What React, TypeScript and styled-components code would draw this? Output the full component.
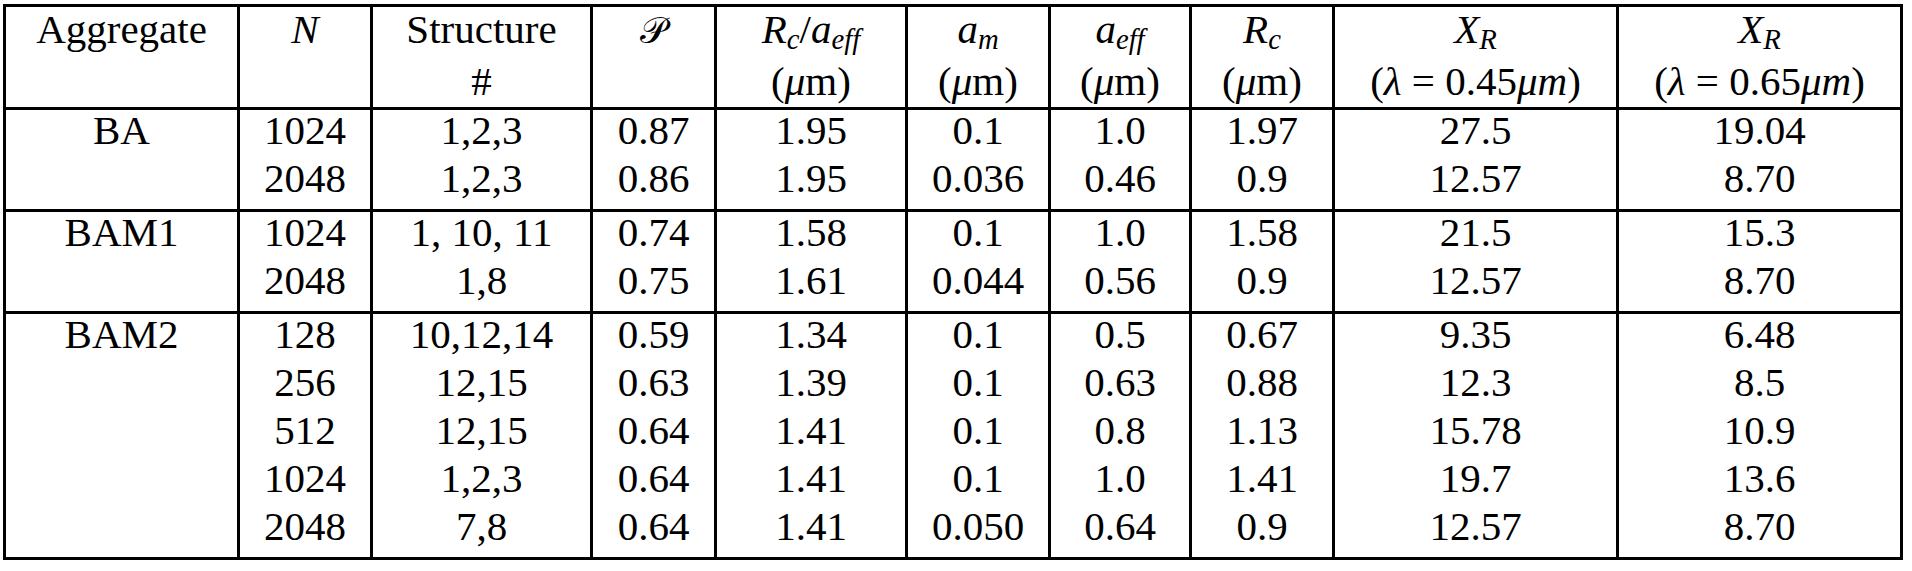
import React from "react";
import styled, { createGlobalStyle } from "styled-components";

const GlobalStyle = createGlobalStyle`
    html, body {
        margin: 0;
        padding: 0;
        background: #ffffff;
        font-family: "Liberation Serif", "Times New Roman", "DejaVu Serif", serif;
    }
`;

const columnWidths = [231, 133, 220, 124, 191, 143, 141, 143, 284, 284];

const Frame = styled.div`
    box-sizing: border-box;
    margin: 4px 0 0 3px;
    width: 1900px;
    border: 3px solid #000;
    display: grid;
    grid-template-columns: ${columnWidths.map((w) => `${w}px`).join(" ")};
    font-family: "Liberation Serif", "Times New Roman", "DejaVu Serif", serif;
    font-size: 41px;
    color: #000;
`;

const HeadCell = styled.div<{ $first: boolean }>`
    box-sizing: border-box;
    height: 100px;
    text-align: center;
    white-space: nowrap;
    font-family: "Liberation Serif", "Times New Roman", serif;
    border-left: ${(p) => (p.$first ? "none" : "3px solid #000")};
`;

const HeadStack = styled.div`
    margin-top: -4px;
`;

const HeadLine = styled.div`
    line-height: 52px;
`;

const Cell = styled.div<{ $first: boolean; $start: boolean; $end: boolean }>`
    box-sizing: border-box;
    padding-bottom: ${(p) => (p.$end ? 10 : 7)}px;
    line-height: 41px;
    text-align: center;
    white-space: nowrap;
    font-family: "Liberation Serif", "Times New Roman", serif;
    border-left: ${(p) => (p.$first ? "none" : "3px solid #000")};
    border-top: ${(p) => (p.$start ? "3px solid #000" : "none")};
`;

const Var = styled.i`
    font-style: italic;
    font-family: "Liberation Serif", "Times New Roman", serif;
`;

const Script = styled.span`
    font-family: "DejaVu Serif", "DejaVu Sans", "Noto Sans", serif;
    font-style: normal;
    font-size: 0.9em;
`;

const Sub = styled.i`
    font-size: 0.7em;
    font-style: italic;
    vertical-align: -0.22em;
    line-height: 0;
`;

type Row = string[];
type Group = { name: string; rows: Row[] };

const groups: Group[] = [
    {
        name: "BA",
        rows: [
            ["1024", "1,2,3", "0.87", "1.95", "0.1", "1.0", "1.97", "27.5", "19.04"],
            ["2048", "1,2,3", "0.86", "1.95", "0.036", "0.46", "0.9", "12.57", "8.70"],
        ],
    },
    {
        name: "BAM1",
        rows: [
            ["1024", "1, 10, 11", "0.74", "1.58", "0.1", "1.0", "1.58", "21.5", "15.3"],
            ["2048", "1,8", "0.75", "1.61", "0.044", "0.56", "0.9", "12.57", "8.70"],
        ],
    },
    {
        name: "BAM2",
        rows: [
            ["128", "10,12,14", "0.59", "1.34", "0.1", "0.5", "0.67", "9.35", "6.48"],
            ["256", "12,15", "0.63", "1.39", "0.1", "0.63", "0.88", "12.3", "8.5"],
            ["512", "12,15", "0.64", "1.41", "0.1", "0.8", "1.13", "15.78", "10.9"],
            ["1024", "1,2,3", "0.64", "1.41", "0.1", "1.0", "1.41", "19.7", "13.6"],
            ["2048", "7,8", "0.64", "1.41", "0.050", "0.64", "0.9", "12.57", "8.70"],
        ],
    },
];

const Micron = () => (
    <>
        (<Var>μ</Var>m)
    </>
);

const Wavelength: React.FC<{ value: string }> = ({ value }) => (
    <>
        (<Var>λ</Var> = {value}<Var>μm</Var>)
    </>
);

const headers: [React.ReactNode, React.ReactNode][] = [
    ["Aggregate", null],
    [<Var>N</Var>, null],
    ["Structure", "#"],
    [<Script>𝒫</Script>, null],
    [
        <>
            <Var>R</Var><Sub>c</Sub>/<Var>a</Var><Sub>eff</Sub>
        </>,
        <Micron />,
    ],
    [<><Var>a</Var><Sub>m</Sub></>, <Micron />],
    [<><Var>a</Var><Sub>eff</Sub></>, <Micron />],
    [<><Var>R</Var><Sub>c</Sub></>, <Micron />],
    [<><Var>X</Var><Sub>R</Sub></>, <Wavelength value="0.45" />],
    [<><Var>X</Var><Sub>R</Sub></>, <Wavelength value="0.65" />],
];

export default function App() {
    return (
        <>
            <GlobalStyle />
            <Frame>
                {headers.map(([top, bottom], i) => (
                    <HeadCell key={`h${i}`} $first={i === 0}>
                        <HeadStack>
                            <HeadLine>{top}</HeadLine>
                            {bottom ? <HeadLine>{bottom}</HeadLine> : null}
                        </HeadStack>
                    </HeadCell>
                ))}
                {groups.map((group) =>
                    group.rows.map((row, r) => {
                        const start = r === 0;
                        const end = r === group.rows.length - 1;
                        const cells = [start ? group.name : "", ...row];
                        return cells.map((value, c) => (
                            <Cell
                                key={`${group.name}-${r}-${c}`}
                                $first={c === 0}
                                $start={start}
                                $end={end}
                            >
                                {value}
                            </Cell>
                        ));
                    })
                )}
            </Frame>
        </>
    );
}
